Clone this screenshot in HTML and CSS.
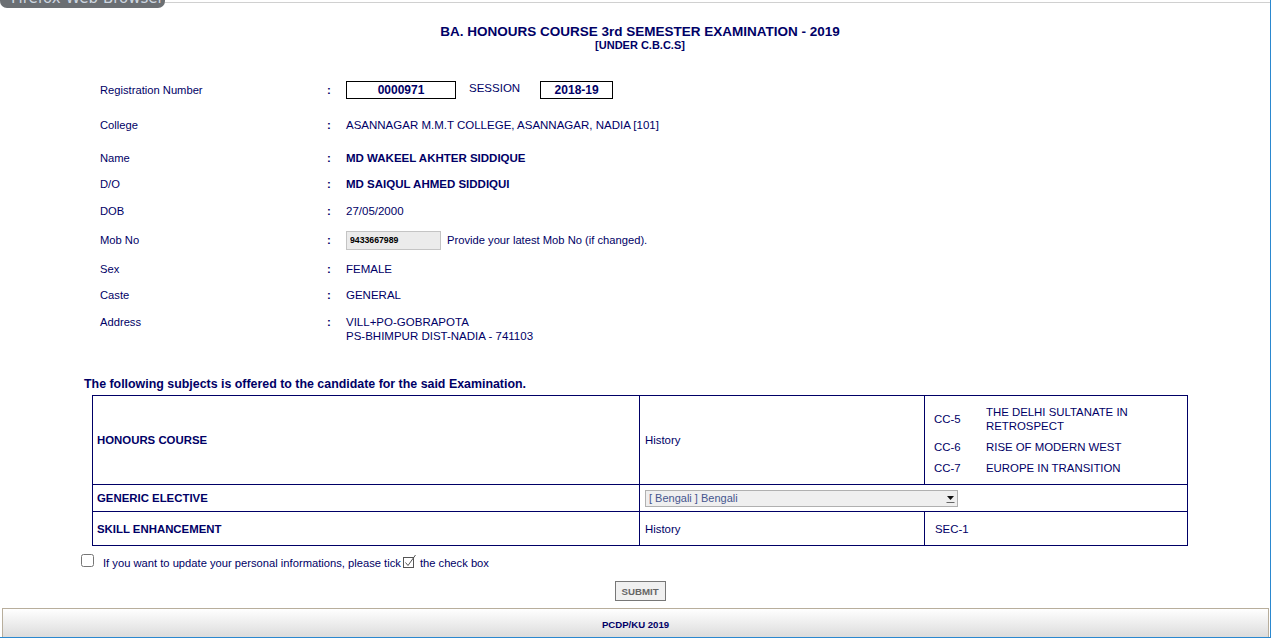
FILE: index.html
```html
<!DOCTYPE html>
<html lang="en">
<head>
<meta charset="utf-8">
<title>BA. Honours Course 3rd Semester Examination - 2019</title>
<link rel="stylesheet" href="styles.css">
</head>
<body>
<div class="window">
  <div class="tab"><span class="tab-text">Firefox Web Browser</span></div>
  <div class="topbar"></div>
  <div class="main">
    <header class="title">
      <h1>BA. HONOURS COURSE 3rd SEMESTER EXAMINATION - 2019</h1>
      <div class="sub">[UNDER C.B.C.S]</div>
    </header>

    <section class="info">
      <div class="row r-reg">
        <div class="lbl">Registration Number</div><div class="col">:</div>
        <div class="val flex">
          <span class="box box-reg">0000971</span>
          <span class="session">SESSION</span>
          <span class="box box-ses">2018-19</span>
        </div>
      </div>
      <div class="row r-col">
        <div class="lbl">College</div><div class="col">:</div>
        <div class="val">ASANNAGAR M.M.T COLLEGE, ASANNAGAR, NADIA [101]</div>
      </div>
      <div class="row r-name">
        <div class="lbl">Name</div><div class="col">:</div>
        <div class="val b">MD WAKEEL AKHTER SIDDIQUE</div>
      </div>
      <div class="row r-do">
        <div class="lbl">D/O</div><div class="col">:</div>
        <div class="val b">MD SAIQUL AHMED SIDDIQUI</div>
      </div>
      <div class="row r-dob">
        <div class="lbl">DOB</div><div class="col">:</div>
        <div class="val">27/05/2000</div>
      </div>
      <div class="row r-mob">
        <div class="lbl">Mob No</div><div class="col">:</div>
        <div class="val flex">
          <input class="mob" type="text" value="9433667989">
          <span class="hint">Provide your latest Mob No (if changed).</span>
        </div>
      </div>
      <div class="row r-sex">
        <div class="lbl">Sex</div><div class="col">:</div>
        <div class="val">FEMALE</div>
      </div>
      <div class="row r-caste">
        <div class="lbl">Caste</div><div class="col">:</div>
        <div class="val">GENERAL</div>
      </div>
      <div class="row r-addr">
        <div class="lbl">Address</div><div class="col">:</div>
        <div class="val">VILL+PO-GOBRAPOTA<br>PS-BHIMPUR DIST-NADIA - 741103</div>
      </div>
    </section>

    <h2 class="subjects-head">The following subjects is offered to the candidate for the said Examination.</h2>

    <table class="subjects">
      <colgroup><col class="c1"><col class="c2"><col class="c3"></colgroup>
      <tr class="tr-hon">
        <th>HONOURS COURSE</th>
        <td>History</td>
        <td class="papers">
          <table class="inner">
            <tr><td class="code">CC-5</td><td>THE DELHI SULTANATE IN RETROSPECT</td></tr>
            <tr><td class="code">CC-6</td><td>RISE OF MODERN WEST</td></tr>
            <tr><td class="code">CC-7</td><td>EUROPE IN TRANSITION</td></tr>
          </table>
        </td>
      </tr>
      <tr class="tr-ge">
        <th>GENERIC ELECTIVE</th>
        <td colspan="2">
          <span class="select-wrap">
            <select class="ge"><option>[ Bengali ] Bengali</option></select>
            <svg class="arrow" width="9" height="9" viewBox="0 0 9 9"><path d="M1 2h7L4.5 6z" fill="#111"/><path d="M0.5 8.5h8" stroke="#666" stroke-width="1"/></svg>
          </span>
        </td>
      </tr>
      <tr class="tr-se">
        <th>SKILL ENHANCEMENT</th>
        <td>History</td>
        <td class="sec">SEC-1</td>
      </tr>
    </table>

    <div class="update">
      <input type="checkbox" class="chk">
      <span class="update-text">If you want to update your personal informations, please tick<svg class="tick" width="14" height="15" viewBox="0 0 14 15"><rect x="0.5" y="3.5" width="10" height="10" fill="none" stroke="#555"/><path d="M2.5 8.5l2.5 3L12.5 1" fill="none" stroke="#555" stroke-width="1"/></svg>the check box</span>
    </div>

    <div class="actions">
      <button class="submit" type="button">SUBMIT</button>
    </div>
  </div>
  <footer class="footer">PCDP/KU 2019</footer>
</div>
</body>
</html>
```

FILE: styles.css
```css
* { box-sizing: border-box; }
html, body { margin: 0; padding: 0; background: #fff; }
body {
  font-family: "Liberation Sans", Arial, sans-serif;
  color: #000066;
  font-size: 11.4px;
}
.window {
  position: relative;
  width: 1271px;
  height: 638px;
  border-right: 1px solid #2b88cf;
  border-bottom: 1px solid #2b88cf;
  background: #fff;
}
.tab {
  position: absolute;
  top: 0;
  left: 0;
  width: 165px;
  height: 8px;
  overflow: hidden;
  background: #6b6f73;
  border-radius: 0 0 7px 7px;
  z-index: 2;
}
.tab-text {
  display: block;
  margin: -10px 0 0 11px;
  font-family: "DejaVu Sans", sans-serif;
  font-size: 15px;
  line-height: 16px;
  color: #cdd6e0;
  white-space: nowrap;
}
.topbar {
  height: 3px;
  border-bottom: 1px solid #d0d0d0;
}
.main {
  padding-left: 10px;
}
.title {
  text-align: center;
  padding-top: 21px;
}
.title h1 {
  margin: 0;
  font-size: 13.5px;
  line-height: 15px;
  font-weight: bold;
  color: #000066;
}
.title .sub {
  font-size: 11px;
  line-height: 12px;
  font-weight: bold;
}
.info {
  margin: 24px 0 0 90px;
}
.row {
  display: grid;
  grid-template-columns: 227px 19px 1fr;
  align-items: center;
}
.r-reg { height: 30px; }
.r-col { height: 40px; }
.r-name { height: 26px; }
.r-do { height: 26px; }
.r-dob { height: 28px; }
.r-mob { height: 30px; }
.r-sex { height: 28px; }
.r-caste { height: 24px; }
.r-addr { align-items: start; padding-top: 8px; line-height: 14px; }
.lbl { font-size: 11.2px; }
.lbl, .col, .val { line-height: 14px; }
.val { font-size: 11.5px; }
.col { font-weight: bold; }
.b { font-weight: bold; }
.flex { display: flex; align-items: center; }
.box {
  display: inline-block;
  height: 18px;
  border: 1px solid #000;
  text-align: center;
  font-size: 12px;
  font-weight: bold;
  line-height: 16px;
  color: #000066;
}
.box-reg { width: 110px; }
.box-ses { width: 73px; }
.session {
  margin: 0 20px 4px 13px;
}
.mob {
  width: 95px;
  height: 19px;
  margin: 0;
  padding: 0 3px;
  border: 1px solid #c4c4c4;
  background: #ebebeb;
  font-family: "Liberation Sans", Arial, sans-serif;
  font-size: 8.7px;
  font-weight: bold;
  color: #000;
}
.hint { margin-left: 6px; font-size: 11.2px; }
.subjects-head {
  margin: 34px 0 0 74px;
  font-size: 12.4px;
  line-height: 14px;
  font-weight: bold;
  color: #000066;
}
.subjects {
  margin: 4px auto 0;
  width: 1096px;
  border-collapse: collapse;
  font-size: 11.4px;
  color: #000066;
}
.subjects .c1 { width: 547px; }
.subjects .c2 { width: 285px; }
.subjects th, .subjects > tbody > tr > td {
  border: 1px solid #000066;
  padding: 0 5px;
  text-align: left;
  vertical-align: middle;
}
.subjects th { padding-left: 4px; font-weight: bold; }
.tr-hon { height: 89px; }
.tr-ge { height: 27px; }
.tr-se { height: 34px; }
.inner {
  border-collapse: separate;
  border-spacing: 1px;
  font-size: 11.4px;
  color: #000066;
}
.inner td {
  padding: 3px;
  line-height: 14px;
  vertical-align: middle;
}
.inner td.code { width: 51px; }
.subjects td.sec { padding-left: 10px; }
.select-wrap {
  position: relative;
  display: inline-block;
  vertical-align: middle;
}
.ge {
  display: block;
  width: 313px;
  height: 17px;
  margin: 0;
  padding: 0 3px;
  border: 1px solid #b0b0b0;
  background: #efefef;
  font-family: "Liberation Sans", Arial, sans-serif;
  font-size: 11px;
  color: #46568e;
  appearance: none;
  -webkit-appearance: none;
  border-radius: 0;
}
.arrow {
  position: absolute;
  right: 3px;
  top: 4px;
}
.update {
  display: flex;
  align-items: center;
  margin: 8px 0 0 71px;
}
.chk {
  width: 13px;
  height: 13px;
  margin: 0 9px 0 0;
  position: relative;
  top: -2px;
}
.update-text { line-height: 16px; font-size: 11.2px; }
.tick { vertical-align: -2px; margin: 0 3px 0 2px; }
.actions {
  text-align: center;
  margin-top: 10px;
}
.submit {
  width: 51px;
  height: 20px;
  padding: 0;
  border: 1px solid #777;
  background: #f0f0f0;
  font-family: "Liberation Sans", Arial, sans-serif;
  font-size: 9.7px;
  font-weight: bold;
  color: #666;
}
.footer {
  margin: 7px 1px 0 2px;
  height: 29px;
  border: 1px solid #b8ae9c;
  border-bottom: 0;
  background: linear-gradient(#ffffff, #dcdcdc);
  text-align: center;
  font-size: 9.6px;
  font-weight: bold;
  line-height: 12px;
  padding-top: 10px;
  color: #000066;
}
```
